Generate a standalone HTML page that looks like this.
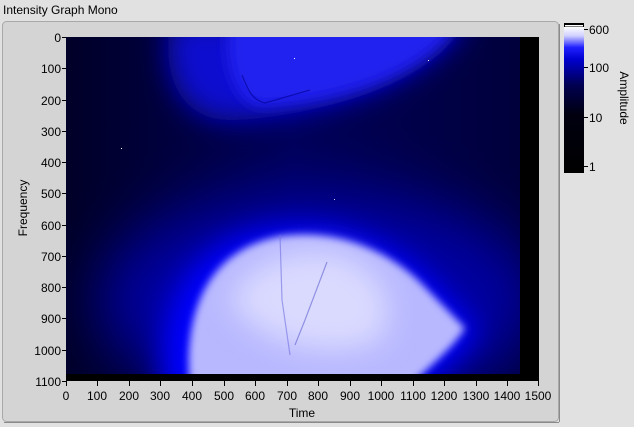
<!DOCTYPE html>
<html><head><meta charset="utf-8"><style>
html,body{margin:0;padding:0;width:634px;height:427px;overflow:hidden;background:#e1e1e1;font-family:"Liberation Sans",sans-serif;}
</style></head><body>
<svg width="634" height="427" xmlns="http://www.w3.org/2000/svg" style="position:absolute;left:0;top:0" font-family="Liberation Sans, sans-serif">
<defs>
<filter id="b12" filterUnits="userSpaceOnUse" x="0" y="0" width="634" height="427"><feGaussianBlur stdDeviation="14"/></filter>
<filter id="b6" filterUnits="userSpaceOnUse" x="0" y="0" width="634" height="427"><feGaussianBlur stdDeviation="7"/></filter>
<filter id="b3" filterUnits="userSpaceOnUse" x="0" y="0" width="634" height="427"><feGaussianBlur stdDeviation="4"/></filter>
<filter id="b30" filterUnits="userSpaceOnUse" x="0" y="0" width="634" height="427"><feGaussianBlur stdDeviation="30"/></filter>
<clipPath id="img"><rect x="66" y="37" width="454" height="337"/></clipPath>
<linearGradient id="cb" x1="0" y1="0" x2="0" y2="1">
<stop offset="0" stop-color="#ffffff"/><stop offset="0.06" stop-color="#d0d0ff"/><stop offset="0.14" stop-color="#2020ff"/><stop offset="0.22" stop-color="#0000d0"/><stop offset="0.4" stop-color="#000050"/><stop offset="0.6" stop-color="#000010"/><stop offset="1" stop-color="#000000"/>
</linearGradient>
<linearGradient id="bg" x1="0" y1="0" x2="1" y2="0">
<stop offset="0" stop-color="#000028"/><stop offset="0.5" stop-color="#000058"/><stop offset="1" stop-color="#00003c"/>
</linearGradient>
</defs>
<text x="3" y="14" font-size="12" fill="#000">Intensity Graph Mono</text>
<rect x="2.5" y="21.5" width="556" height="400" rx="4" fill="#d4d4d4" stroke="#a8a8a8"/>
<line x1="4" y1="422.5" x2="559" y2="422.5" stroke="#8a8a8a"/>
<line x1="559.5" y1="24" x2="559.5" y2="422" stroke="#8a8a8a"/>
<rect x="66" y="37" width="473" height="344" fill="#000"/>
<g clip-path="url(#img)">
<rect x="66" y="37" width="454" height="337" fill="url(#bg)"/>
<ellipse cx="320" cy="300" rx="220" ry="110" fill="#0000a0" filter="url(#b30)"/>
<path d="M170,20 L470,20 C430,80 340,112 240,120 C190,124 160,90 170,20Z" fill="#0c0cd0" filter="url(#b12)"/>
<path d="M230,20 L460,20 C425,75 345,100 265,106 C235,108 222,60 230,20Z" fill="#2020f0" filter="url(#b6)"/>
<path d="M165,400 C150,300 195,235 280,226 C335,220 390,240 430,278 L478,330 C468,352 440,372 410,400 Z" fill="#0000ff" filter="url(#b12)"/>
<path d="M190,390 C182,305 212,248 282,236 C330,230 380,245 418,280 L465,328 C455,345 435,362 405,390 Z" fill="#b8b8ff" filter="url(#b3)"/>
<path d="M230,300 C250,260 300,245 340,255 C380,270 400,300 380,340 C340,360 260,350 230,300Z" fill="#dadaff" filter="url(#b12)"/>
<path d="M280,235 L282,300 L290,355" stroke="#7070e0" stroke-width="1.2" fill="none" opacity="0.6"/>
<path d="M327,262 L305,320 L295,345" stroke="#6060d0" stroke-width="1.2" fill="none" opacity="0.6"/>
<path d="M242,75 C248,90 252,100 265,103 L310,90" stroke="#000090" stroke-width="1.2" fill="none" opacity="0.6"/>
<rect x="294" y="58" width="1" height="1" fill="#fff"/><rect x="428" y="60" width="1" height="1" fill="#fff"/>
<rect x="121" y="148" width="1" height="1" fill="#fff"/><rect x="334" y="199" width="1" height="1" fill="#ccf"/>
</g>
<g stroke="#000" stroke-width="1">
<line x1="62" y1="37.5" x2="66" y2="37.5"/><line x1="62" y1="68.5" x2="66" y2="68.5"/><line x1="62" y1="100.5" x2="66" y2="100.5"/><line x1="62" y1="131.5" x2="66" y2="131.5"/><line x1="62" y1="162.5" x2="66" y2="162.5"/><line x1="62" y1="193.5" x2="66" y2="193.5"/><line x1="62" y1="225.5" x2="66" y2="225.5"/><line x1="62" y1="256.5" x2="66" y2="256.5"/><line x1="62" y1="287.5" x2="66" y2="287.5"/><line x1="62" y1="318.5" x2="66" y2="318.5"/><line x1="62" y1="350.5" x2="66" y2="350.5"/><line x1="62" y1="381.5" x2="66" y2="381.5"/>
<line x1="66.5" y1="381" x2="66.5" y2="386"/><line x1="97.5" y1="381" x2="97.5" y2="386"/><line x1="129.5" y1="381" x2="129.5" y2="386"/><line x1="160.5" y1="381" x2="160.5" y2="386"/><line x1="192.5" y1="381" x2="192.5" y2="386"/><line x1="224.5" y1="381" x2="224.5" y2="386"/><line x1="255.5" y1="381" x2="255.5" y2="386"/><line x1="287.5" y1="381" x2="287.5" y2="386"/><line x1="318.5" y1="381" x2="318.5" y2="386"/><line x1="350.5" y1="381" x2="350.5" y2="386"/><line x1="381.5" y1="381" x2="381.5" y2="386"/><line x1="413.5" y1="381" x2="413.5" y2="386"/><line x1="444.5" y1="381" x2="444.5" y2="386"/><line x1="476.5" y1="381" x2="476.5" y2="386"/><line x1="507.5" y1="381" x2="507.5" y2="386"/><line x1="538.5" y1="381" x2="538.5" y2="386"/>
</g>
<g font-size="12" fill="#000" text-anchor="end">
<text x="61" y="42">0</text><text x="61" y="73">100</text><text x="61" y="105">200</text><text x="61" y="136">300</text><text x="61" y="167">400</text><text x="61" y="198">500</text><text x="61" y="230">600</text><text x="61" y="261">700</text><text x="61" y="292">800</text><text x="61" y="323">900</text><text x="61" y="355">1000</text><text x="61" y="386">1100</text>
</g>
<g font-size="12" fill="#000" text-anchor="middle">
<text x="66" y="400">0</text><text x="97" y="400">100</text><text x="129" y="400">200</text><text x="160" y="400">300</text><text x="192" y="400">400</text><text x="224" y="400">500</text><text x="255" y="400">600</text><text x="287" y="400">700</text><text x="318" y="400">800</text><text x="350" y="400">900</text><text x="381" y="400">1000</text><text x="413" y="400">1100</text><text x="444" y="400">1200</text><text x="476" y="400">1300</text><text x="507" y="400">1400</text><text x="538" y="400">1500</text>
<text x="302" y="417">Time</text>
<text transform="translate(27,208) rotate(-90)">Frequency</text>
<text transform="translate(620,98) rotate(90)">Amplitude</text>
</g>
<rect x="564" y="23" width="20" height="4" fill="#000"/>
<rect x="564" y="27" width="20" height="146" fill="url(#cb)"/>
<rect x="565" y="25" width="18" height="1.5" fill="#fff"/>
<g stroke="#000"><line x1="584" y1="29.5" x2="588" y2="29.5"/><line x1="584" y1="67.5" x2="588" y2="67.5"/><line x1="584" y1="117.5" x2="588" y2="117.5"/><line x1="584" y1="166.5" x2="588" y2="166.5"/></g>
<g font-size="12" fill="#000"><text x="589" y="34">600</text><text x="589" y="72">100</text><text x="589" y="122">10</text><text x="589" y="171">1</text></g>
</svg>
</body></html>
